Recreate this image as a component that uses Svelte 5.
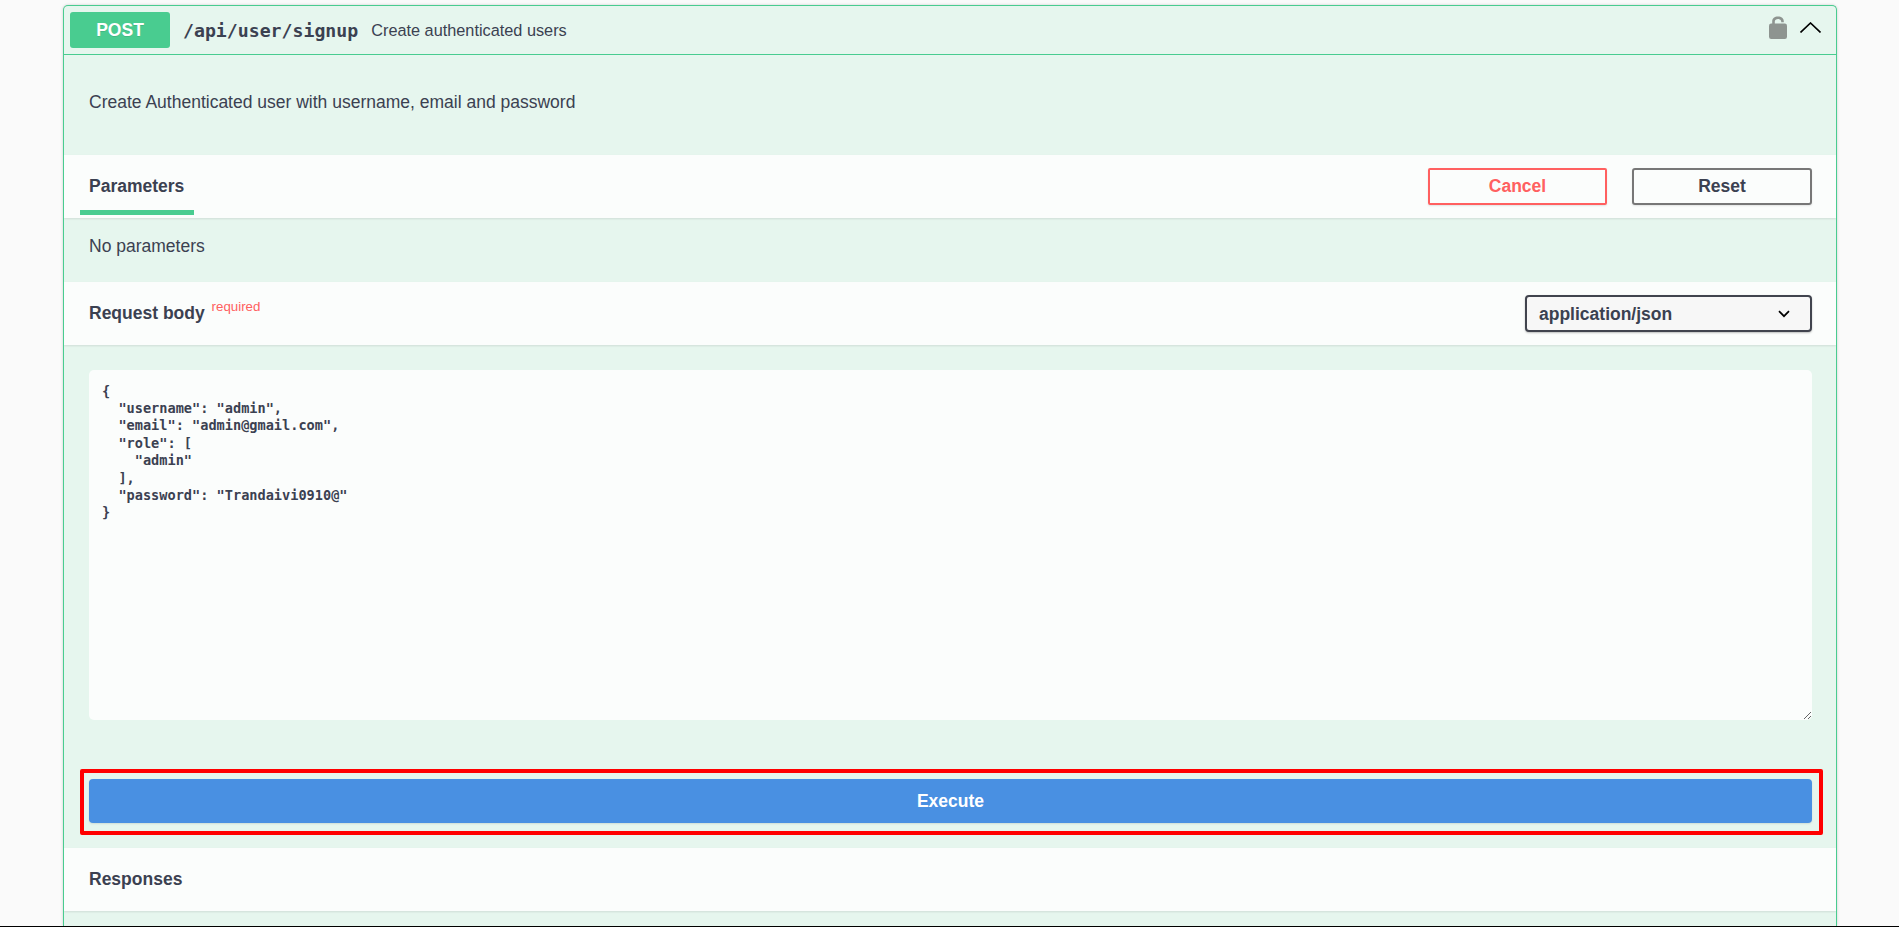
<!--
  Expanded POST operation block of an API docs page: signup endpoint in try-it-out mode.
-->

<script lang="ts">
  const body = `{
  "username": "admin",
  "email": "admin@gmail.com",
  "role": [
    "admin"
  ],
  "password": "Trandaivi0910@"
}`;
</script>

<div class="page">
  <div class="opblock">
    <!-- ── Summary row ── -->
    <div class="summary">
      <span class="method">POST</span>
      <span class="path">/api/user/signup</span>
      <span class="summary-text">Create authenticated users</span>
      <svg class="lock" viewBox="0 0 18 23" aria-hidden="true">
        <path d="M3.2 9V5.6C3.2 2.4 5.6.6 9 .6s5.8 1.8 5.8 5v.6h-2.6v-.6C12.2 4 10.8 3.1 9 3.1S5.8 4 5.8 5.6V9z" fill="#8e9490" />
        <rect x="0" y="7.6" width="18" height="15.4" rx="2.2" fill="#8e9490" />
      </svg>
      <svg class="chevron" viewBox="0 0 21 11" aria-hidden="true">
        <path d="M.5 10.5 10.5 1l10 9.5" fill="none" stroke="#000" stroke-width="1.6" />
      </svg>
    </div>

    <div class="description">Create Authenticated user with username, email and password</div>

    <!-- ── Parameters ── -->
    <div class="section-header params-header">
      <div class="tab">Parameters</div>
      <div class="actions">
        <button class="btn cancel">Cancel</button>
        <button class="btn reset">Reset</button>
      </div>
    </div>
    <div class="no-params">No parameters</div>

    <!-- ── Request body ── -->
    <div class="section-header body-header">
      <div class="body-title">Request body <sup>required</sup></div>
      <div class="select">
        <span>application/json</span>
        <svg viewBox="0 0 12 8" aria-hidden="true">
          <path d="M1 1.2 6 6.2l5-5" fill="none" stroke="#000" stroke-width="1.7" />
        </svg>
      </div>
    </div>

    <div class="body-content">
      <textarea class="editor" spellcheck="false" value={body}></textarea>
    </div>

    <div class="execute-wrap">
      <div class="highlight">
        <button class="execute">Execute</button>
      </div>
    </div>

    <!-- ── Responses ── -->
    <div class="section-header responses-header">
      <div class="responses-title">Responses</div>
    </div>
    <div class="tail"></div>
  </div>
  <div class="edge"></div>
</div>

<style>
  :global(body) {
    margin: 0;
    background: #fafafa;
    overflow: hidden;
  }

  .page {
    height: 927px;
    box-sizing: border-box;
    padding-top: 5px;
    display: flex;
    flex-direction: column;
    overflow: hidden;
    font-family: 'Liberation Sans', Arial, sans-serif;
    color: #3b4151;
  }

  .opblock {
    flex: 1;
    min-height: 0;
    margin: 0 62px 0 63px;
    border: 1px solid #49cc90;
    border-bottom: none;
    border-radius: 5px 5px 0 0;
    background: #e6f6ee;
    box-shadow: 0 0 3px rgba(0, 0, 0, 0.19);
    overflow: hidden;
  }

  .edge {
    height: 1px;
    background: #000;
  }

  /* Summary */
  .summary {
    height: 49px;
    box-sizing: border-box;
    border-bottom: 1px solid #49cc90;
    display: flex;
    align-items: center;
    padding: 0 15px 0 6px;
  }

  .method {
    width: 100px;
    height: 36px;
    box-sizing: border-box;
    padding-top: 1px;
    display: flex;
    align-items: center;
    justify-content: center;
    border-radius: 3px;
    background: #49cc90;
    color: #fff;
    font-size: 17.5px;
    font-weight: 700;
    text-shadow: 0 1px 0 rgba(0, 0, 0, 0.1);
    margin-top: -1px;
  }

  .path {
    margin-left: 13px;
    font-family: 'DejaVu Sans Mono', monospace;
    font-size: 18.2px;
    font-weight: 700;
  }

  .summary-text {
    margin-left: 13px;
    font-size: 16.3px;
    flex: 1;
  }

  .lock {
    width: 18px;
    height: 23px;
    margin-top: -6px;
  }

  .chevron {
    width: 21px;
    height: 11px;
    margin-left: 13px;
    margin-top: -5px;
  }

  .description {
    height: 100px;
    box-sizing: border-box;
    padding: 37px 0 0 25px;
    font-size: 17.5px;
    line-height: 20px;
  }

  /* Section headers */
  .section-header {
    display: flex;
    align-items: center;
    justify-content: space-between;
    box-sizing: border-box;
    height: 63px;
    padding: 0 24px 0 25px;
    background: #fbfdfc;
    box-shadow: 0 1px 2px rgba(0, 0, 0, 0.1);
    font-size: 17.5px;
    font-weight: 700;
  }

  .params-header {
    position: relative;
    padding-left: 16px;
  }

  .tab {
    align-self: flex-end;
    width: 114px;
    box-sizing: border-box;
    height: 55px;
    padding: 16px 0 0 9px;
    border-bottom: 5px solid #49cc90;
    margin-bottom: 3px;
    line-height: 20px;
  }

  .actions {
    display: flex;
    gap: 25px;
  }

  .btn {
    width: 180px;
    height: 37px;
    box-sizing: border-box;
    background: transparent;
    border-radius: 2px;
    font-family: inherit;
    font-size: 17.5px;
    font-weight: 700;
    box-shadow: 0 1px 2px rgba(0, 0, 0, 0.1);
    padding: 0;
  }

  .cancel {
    width: 179px;
    border: 2px solid #ff6060;
    color: #ff6060;
  }

  .reset {
    border: 2px solid #777;
    border-radius: 3px;
    color: #3b4151;
  }

  .no-params {
    height: 64px;
    box-sizing: border-box;
    padding: 18px 0 0 25px;
    font-size: 17.5px;
    line-height: 20px;
  }

  .body-title {
    line-height: 20px;
    margin-top: -1px;
  }

  sup {
    font-size: 13.3px;
    font-weight: 400;
    color: #ff6060;
    vertical-align: 8px;
    line-height: 0;
    margin-left: 2px;
  }

  .select {
    width: 287px;
    height: 37px;
    box-sizing: border-box;
    display: flex;
    align-items: center;
    justify-content: space-between;
    padding: 1px 20px 0 12px;
    border: 2px solid #41444e;
    border-radius: 4px;
    background: #f7f7f7;
    box-shadow: 0 1px 2px rgba(0, 0, 0, 0.25);
  }

  .select svg {
    width: 12px;
    height: 8px;
  }

  .body-content {
    height: 424px;
    box-sizing: border-box;
    padding: 25px 24px 0 25px;
  }

  .editor {
    display: block;
    width: 100%;
    height: 350px;
    box-sizing: border-box;
    padding: 12.5px 13px;
    margin: 0;
    border: none;
    outline: none;
    border-radius: 5px;
    background: #fbfdfc;
    color: #3b4151;
    font-family: 'DejaVu Sans Mono', monospace;
    font-size: 13.6px;
    font-weight: 700;
    line-height: 17.4px;
  }

  .execute-wrap {
    height: 79px;
    box-sizing: border-box;
    padding: 0 13px 0 16px;
  }

  .highlight {
    height: 66px;
    box-sizing: border-box;
    border: 4px solid #f00;
    border-radius: 2px;
    padding: 6px 7px 5px 5px;
  }

  .execute {
    display: block;
    width: 100%;
    height: 44px;
    padding: 0;
    border: none;
    border-radius: 4px;
    background: #4990e2;
    color: #fff;
    font-family: inherit;
    font-size: 17.5px;
    font-weight: 700;
    box-shadow: 0 1px 2px rgba(0, 0, 0, 0.1);
  }
</style>
